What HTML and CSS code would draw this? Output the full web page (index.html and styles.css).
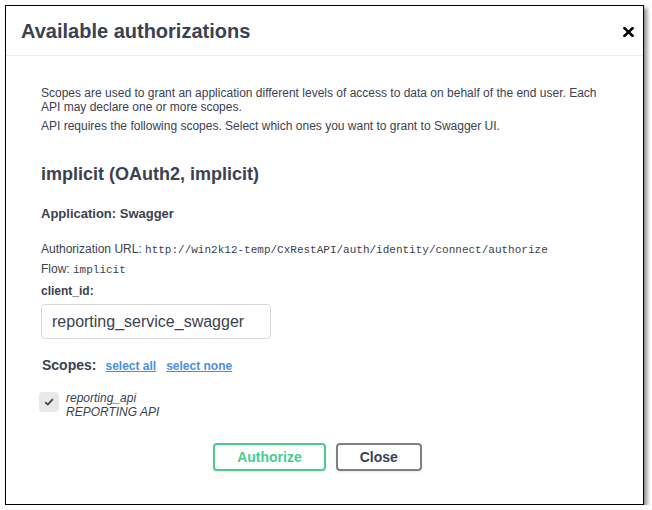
FILE: index.html
```html
<!DOCTYPE html>
<html lang="en">
<head>
    <meta charset="UTF-8">
    <title>Available authorizations</title>
    <link rel="stylesheet" href="styles.css">
</head>
<body>
    <div class="modal">
        <div class="modal-header">
            <h3>Available authorizations</h3>
            <button class="close-modal" aria-label="Close">
                <svg width="11" height="10" viewBox="0 0 11 10">
                    <path d="M1.5 1.2 L9.5 8.8 M9.5 1.2 L1.5 8.8" stroke="#000" stroke-width="2.6" stroke-linecap="square"/>
                </svg>
            </button>
        </div>

        <div class="modal-content">
            <p class="intro">Scopes are used to grant an application different levels of access to data on behalf of the end user. Each API may declare one or more scopes.</p>
            <p class="intro">API requires the following scopes. Select which ones you want to grant to Swagger UI.</p>

            <h4>implicit (OAuth2, implicit)</h4>
            <p class="app-name">Application: Swagger</p>

            <p class="flow-row">Authorization URL: <code>http://win2k12-temp/CxRestAPI/auth/identity/connect/authorize</code></p>
            <p class="flow-row">Flow: <code>implicit</code></p>

            <label class="field-label" for="client_id">client_id:</label>
            <input id="client_id" class="text-input" type="text" value="reporting_service_swagger">

            <div class="scopes-row">
                <span class="scopes-title">Scopes:</span>
                <a href="#" class="scope-link">select all</a>
                <a href="#" class="scope-link">select none</a>
            </div>

            <div class="scope-item">
                <span class="checkbox">
                    <svg width="10" height="8" viewBox="0 0 10 8">
                        <path d="M1.2 4.2 L3.8 6.6 L8.8 1.2" fill="none" stroke="#41444e" stroke-width="1.8"/>
                    </svg>
                </span>
                <div class="scope-text">
                    <div>reporting_api</div>
                    <div>REPORTING API</div>
                </div>
            </div>

            <!-- buttons at the bottom of the dialog -->
            <div class="actions">
                <button class="btn authorize">Authorize</button>
                <button class="btn">Close</button>
            </div>
        </div>
    </div>
</body>
</html>
```

FILE: styles.css
```css
body {
    margin: 0;
    background-color: #fff;
    font-family: "Liberation Sans", Arial, sans-serif;
    color: #3b4151;
}

.modal {
    margin: 5px 0 0 5px;
    width: 639px;
    height: 500px;
    box-sizing: border-box;
    border: 1px solid #000;
    background-color: #fff;
    box-shadow: 3px 3px 4px rgba(0, 0, 0, 0.45);
}

.modal-header {
    display: flex;
    align-items: center;
    justify-content: space-between;
    box-sizing: border-box;
    height: 50px;
    padding: 2px 9px 0 15px;
    border-bottom: 1px solid #ebebeb;
}

.modal-header h3 {
    margin: 0;
    font-size: 20px;
    font-weight: bold;
    color: #3b4151;
}

.close-modal {
    padding: 0;
    border: none;
    background: none;
    display: flex;
    cursor: pointer;
}

.modal-content {
    padding: 30px 35px 0 35px;
}

.intro {
    margin: 0 0 5px;
    font-size: 12px;
    line-height: 14px;
}

h4 {
    margin: 30px 0 0;
    font-size: 18px;
    line-height: 22px;
}

.app-name {
    margin: 21px 0 0;
    font-size: 13px;
    font-weight: bold;
}

.flow-row {
    margin: 0;
    font-size: 12px;
    line-height: 19px;
}

.app-name + .flow-row {
    margin-top: 19px;
}

.flow-row code {
    font-family: "Liberation Mono", "DejaVu Sans Mono", monospace;
    font-size: 11px;
}

.field-label {
    display: block;
    margin-top: 3px;
    font-size: 12px;
    font-weight: bold;
    line-height: 16px;
}

.text-input {
    display: block;
    box-sizing: border-box;
    width: 230px;
    height: 35px;
    margin-top: 5px;
    padding: 0 10px;
    border: 1px solid #d9d9d9;
    border-radius: 4px;
    font-family: inherit;
    font-size: 16px;
    color: #3b4151;
}

.scopes-row {
    display: flex;
    align-items: baseline;
    gap: 10px;
    margin-top: 18px;
    font-size: 12px;
    font-weight: bold;
}

.scopes-title {
    margin-left: 1px;
    margin-right: -1px;
    font-size: 14px;
}

.scope-link {
    color: #4990e2;
}

.scope-item {
    display: flex;
    gap: 7px;
    margin-top: 18px;
    margin-left: -2px;
}

.checkbox {
    display: flex;
    align-items: center;
    justify-content: center;
    width: 20px;
    height: 20px;
    margin-top: 1px;
    border-radius: 4px;
    background-color: #e8e8e8;
}

.scope-text {
    font-size: 12px;
    font-style: italic;
    line-height: 14px;
    color: #3b4151;
}

.actions {
    display: flex;
    justify-content: center;
    gap: 10px;
    margin-top: 24px;
    margin-right: 14px;
}

.btn {
    box-sizing: border-box;
    height: 28px;
    padding: 0 22px;
    border: 2px solid #808080;
    border-radius: 4px;
    background: transparent;
    font-family: inherit;
    font-size: 14px;
    font-weight: bold;
    color: #3b4151;
    box-shadow: 0 1px 2px rgba(0, 0, 0, 0.1);
    cursor: pointer;
}

.btn.authorize {
    border-color: #49cc90;
    color: #49cc90;
}
```
